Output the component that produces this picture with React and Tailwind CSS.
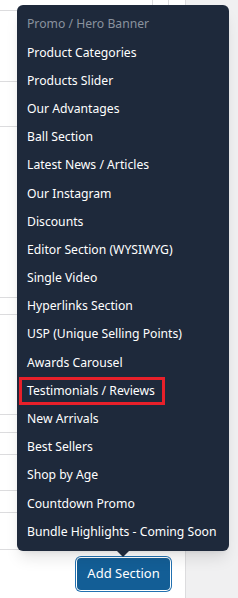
import React from 'react';

const ITEMS = [
  'Promo / Hero Banner',
  'Product Categories',
  'Products Slider',
  'Our Advantages',
  'Ball Section',
  'Latest News / Articles',
  'Our Instagram',
  'Discounts',
  'Editor Section (WYSIWYG)',
  'Single Video',
  'Hyperlinks Section',
  'USP (Unique Selling Points)',
  'Awards Carousel',
  'Testimonials / Reviews',
  'New Arrivals',
  'Best Sellers',
  'Shop by Age',
  'Countdown Promo',
  'Bundle Highlights - Coming Soon',
];

// row heights of the table behind the menu (border included)
const ROWS = ['h-[71px]', 'h-[45px]', 'h-[171px]', 'h-[17px]', 'h-[100px]', 'h-[18px]', 'h-[22px]', 'h-[36px]', 'h-[22px]', 'h-[37px]'];

const SectionMenu = () => (
  <div className="absolute left-[-59px] bottom-[calc(100%+6px)] w-[212px] rounded-md bg-[#1e293b] py-[5px] shadow-lg">
    {ITEMS.map((item, i) =>
      item === 'Testimonials / Reviews' ? (
        <div key={item} className="flex h-[28.2px] items-center px-[2px]">
          <div className="flex h-[28px] w-[146px] items-center border-[3px] border-[#e8202a] pl-[5px] text-[12.2px] whitespace-nowrap text-white">
            {item}
          </div>
        </div>
      ) : (
        <div
          key={item}
          className={
            'flex h-[28.2px] items-center px-[10px] text-[12.2px] whitespace-nowrap ' +
            (i === 0 ? 'text-[#8a929e]' : 'text-white')
          }
        >
          {item}
        </div>
      )
    )}
    <span className="absolute left-1/2 top-full -translate-x-1/2 border-x-[6px] border-t-[6px] border-x-transparent border-t-[#1e293b]" />
  </div>
);

export default function App() {
  return (
    <div className="flex h-[598px] w-[238px] overflow-hidden bg-white" style={{ fontFamily: '"Noto Sans", "Open Sans", sans-serif' }}>
      <div className="flex w-[186px] flex-col border-r border-[#dcdcde]">
        <div className="flex h-[11px] border-b border-[#dcdcde]">
          <div className="w-[152px]" />
          <div className="w-[16px] border-l border-[#dcdcde]" />
          <div className="flex-1 border-l border-[#dcdcde]" />
        </div>
        {ROWS.map((h, i) => (
          <div key={i} className={h + ' border-b border-[#dcdcde]'} />
        ))}
        <div className="pl-[76px] pt-[7px]">
          <div className="relative w-[95px]">
            <SectionMenu />
            <button className="h-[34px] w-[95px] rounded-[5px] bg-[#135e96] text-[13px] text-white shadow-[inset_0_0_0_1px_#ffffff] ring-1 ring-[#2271b1]">
              Add Section
            </button>
          </div>
        </div>
      </div>
      <div className="flex-1 bg-[#f0f0f1]" />
    </div>
  );
}
